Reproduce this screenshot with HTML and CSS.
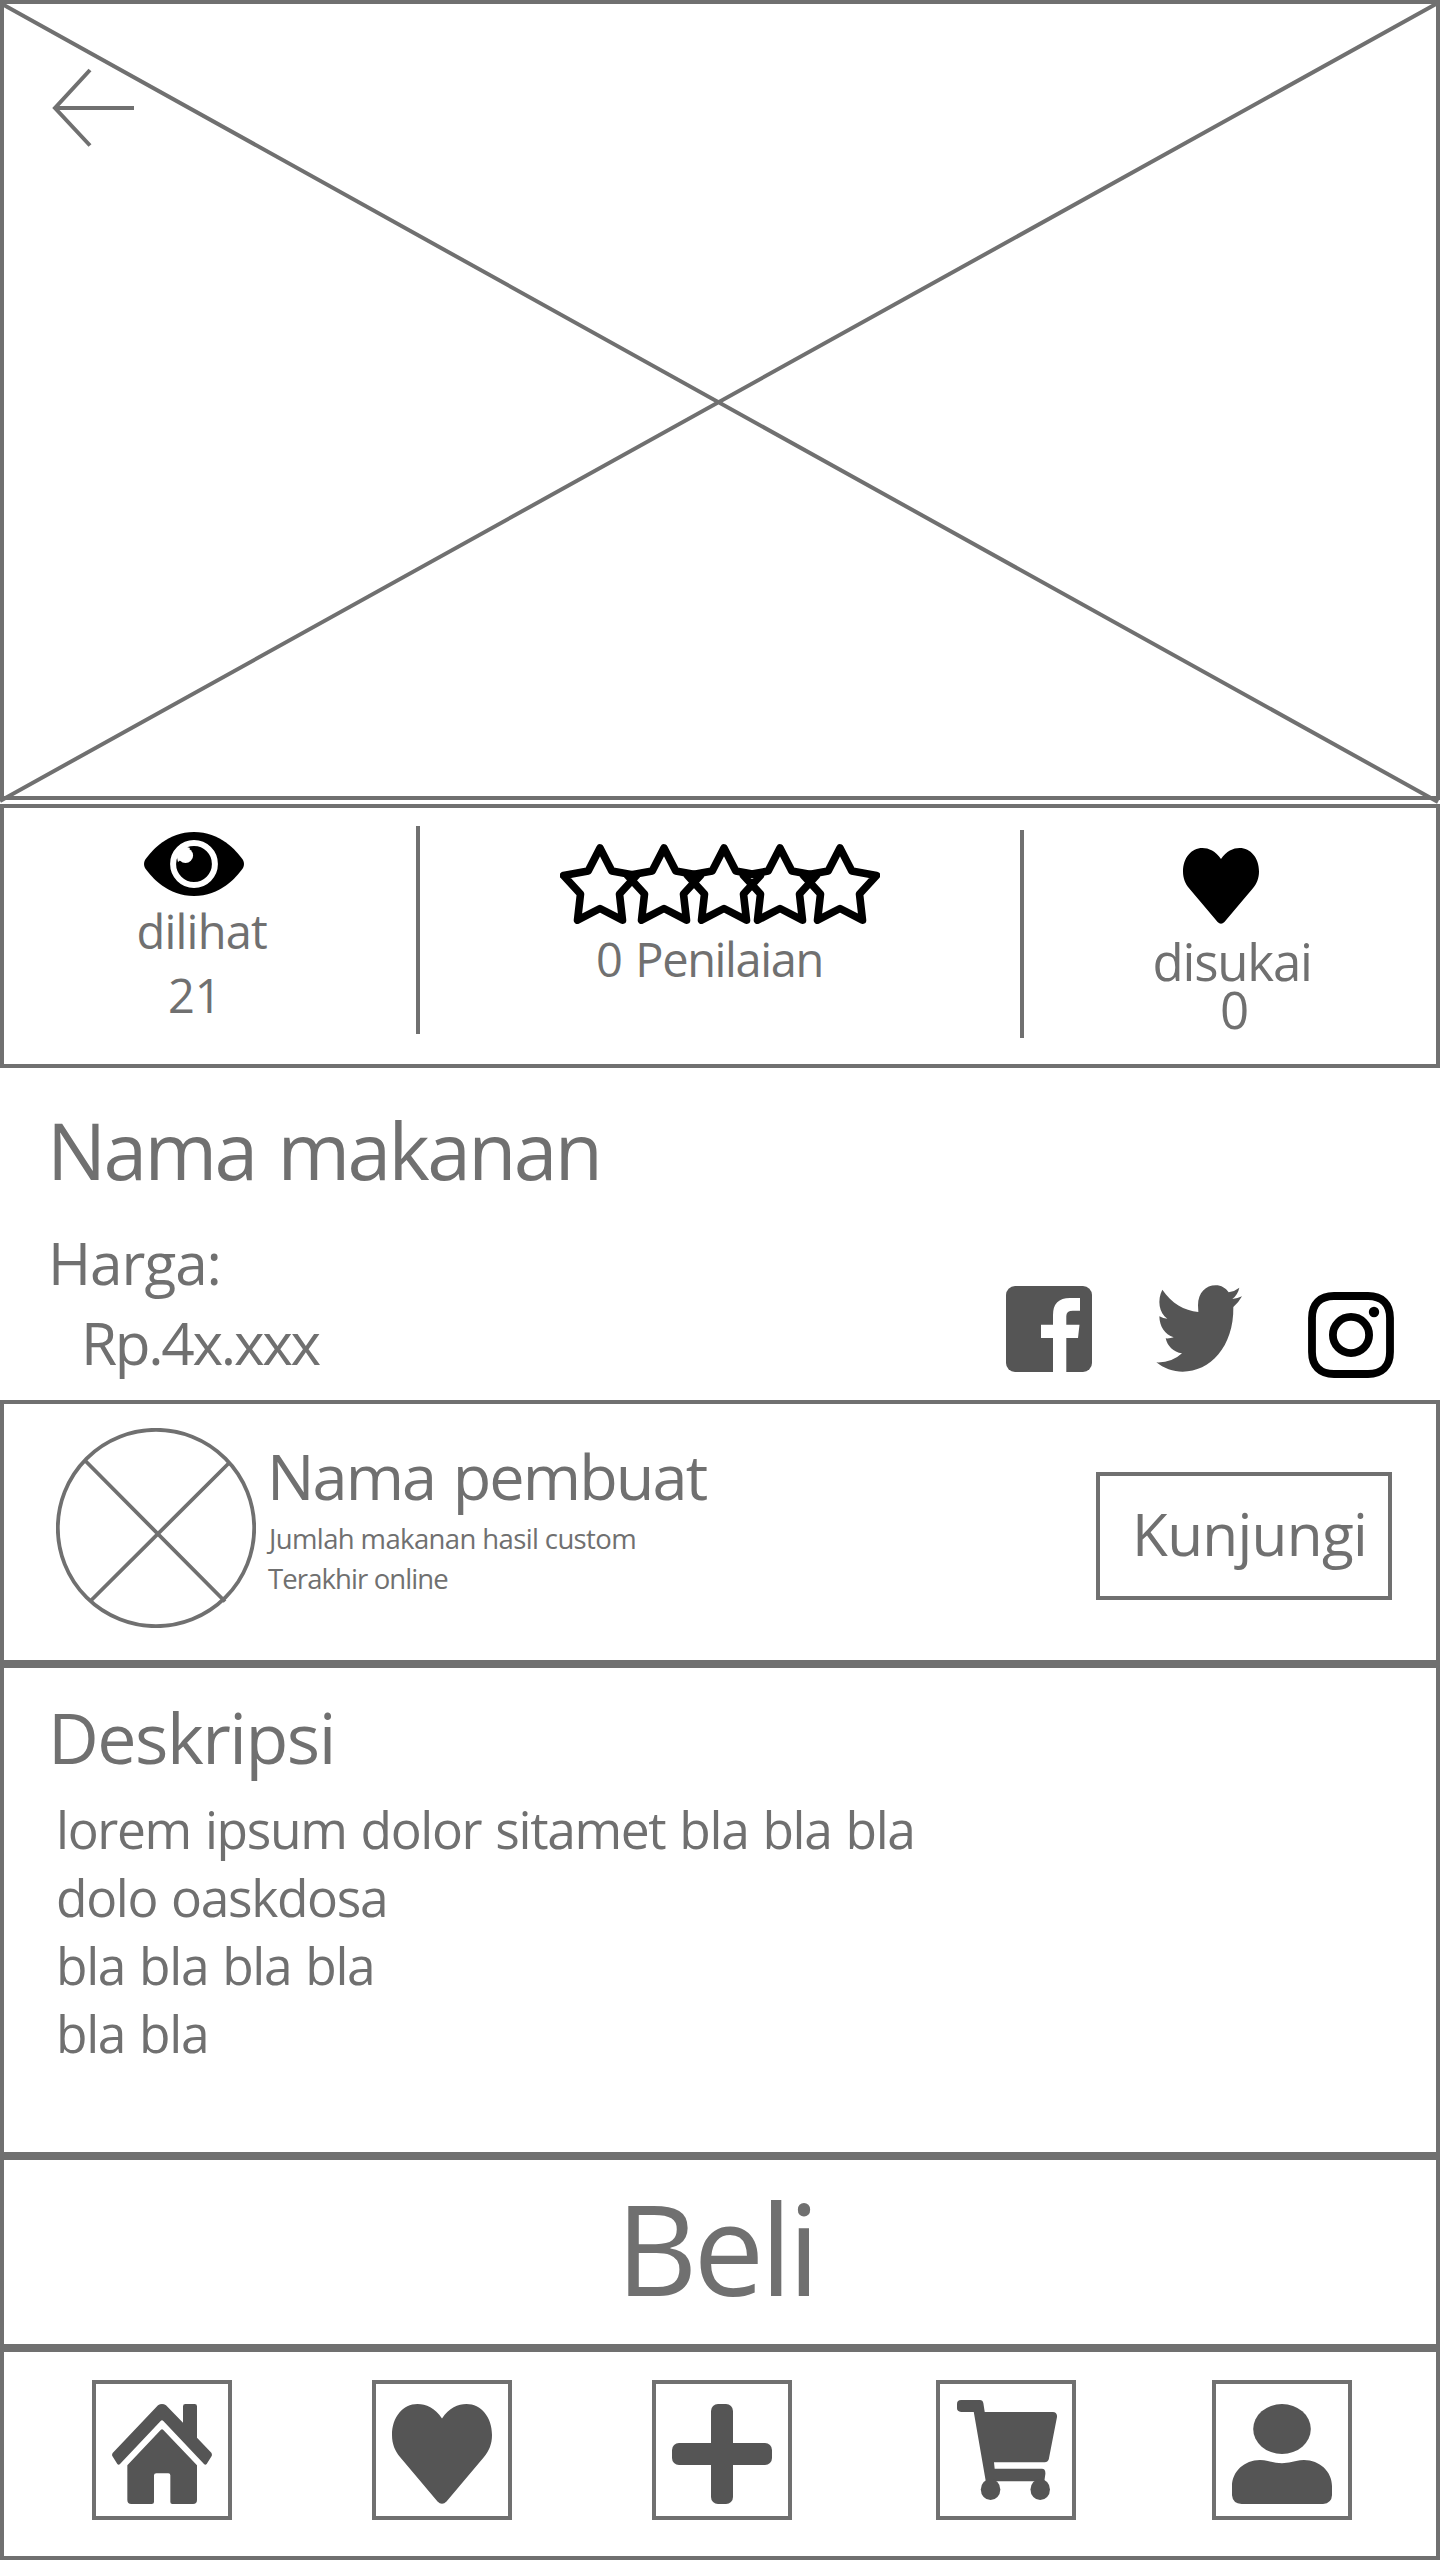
FILE: index.html
```html
<!DOCTYPE html>
<html lang="id">
<head>
<meta charset="utf-8">
<title>Nama makanan</title>
<link rel="stylesheet" href="styles.css">
</head>
<body>
<main class="page">
  <header class="hero">
    <svg class="hero-cross" width="1440" height="804" viewBox="0 0 1440 804">
      <path d="M2 4 1438 802M0 801 1436 4"/>
      <path d="M134 108H55M90 70 55 108 90 145.500"/>
    </svg>
  </header>

  <section class="stats">
    <div class="stat stat-views">
      <svg class="eye" width="100" height="64" viewBox="144 832 100 64">
        <path d="M145 860C152 850 168 832 194 832S236 850 243 860Q245 864 243 868C236 878 220 896 194 896S152 878 145 868Q143 864 145 860Z"/>
        <circle class="eye-ring" cx="194" cy="864" r="20.900"/>
        <path class="eye-glint" d="M178 862 176 853 184 846 190 848 186 856Z"/>
        <circle class="eye-glint" cx="185.500" cy="855.500" r="7.600"/>
      </svg>
      <p class="label views-label">dilihat</p>
      <p class="label views-count">21</p>
    </div>
    <span class="divider divider-left"></span>
    <div class="stat stat-rating">
      <svg class="stars" width="320" height="80" viewBox="0 0 320 80">
        <defs><path id="star" d="M40 4 51.800 27 76.500 31.500 59.500 50 62.500 76.200 40 64.500 17.500 76.200 20.500 50 3.500 31.500 28.200 27Z"/></defs>
        <use href="#star"/><use href="#star" x="64"/><use href="#star" x="124"/><use href="#star" x="180"/><use href="#star" x="240"/>
      </svg>
      <p class="label rating-label">0 Penilaian</p>
    </div>
    <span class="divider divider-right"></span>
    <div class="stat stat-likes">
      <svg class="like" width="76" height="76" viewBox="0 0 100 100">
        <path id="heart" d="M50 14.500C43 4 34 0 25.500 0 11 0 0 13 0 31 0 40 3 47 8 53L45.500 97.500Q50 102 54.500 97.500L92 53C97 47 100 40 100 31 100 13 89 0 74.500 0 66 0 57 4 50 14.500Z"/>
      </svg>
      <p class="label likes-label">disukai</p>
      <p class="label likes-count">0</p>
    </div>
  </section>

  <section class="product">
    <h1 class="product-name">Nama makanan</h1>
    <div class="product-row">
      <div class="price">
        <p class="price-label">Harga:</p>
        <p class="price-value">Rp.4x.xxx</p>
      </div>
      <div class="social">
        <svg class="facebook" width="86" height="86" viewBox="0 0 86 86">
          <rect width="86" height="86" rx="9"/>
          <path class="cutout" d="M47 86.500V52H35V38.700H47V29Q47 12 64 12H74V24.700H67Q60.300 24.700 60.300 30V38.700H73.500L72 52H60.300V86.500Z"/>
        </svg>
        <svg class="twitter" width="86" height="87" viewBox="588 135 258 261">
          <path d="M607 149C635 190 672 211 715 216L714 196C714 158 738 136 767 136 784 136 797 144 806 157Q826 153 838 143 834 163 817 177 833 175 846 169 837 186 820 201C822 320 750 395 668 395 640 395 610 385 589 367Q635 369 666 340C640 337 622 318 617 295Q630 296 641 292C614 283 599 260 598 229Q610 236 622 236C597 218 591 180 607 149Z"/>
        </svg>
        <svg class="instagram" width="86" height="86" viewBox="0 0 86 86">
          <path class="ring" d="M26 4H60C74 4 82 12 82 26V60C82 74 74 82 60 82H26C12 82 4 74 4 60V26C4 12 12 4 26 4Z"/>
          <circle class="ring" cx="43" cy="43" r="18.100"/>
          <circle cx="66" cy="20" r="5.200"/>
        </svg>
      </div>
    </div>
  </section>

  <section class="panel seller">
    <svg class="avatar" width="200" height="200" viewBox="56 1428 200 200">
      <circle cx="156" cy="1528" r="98.200"/>
      <path d="M84.500 1460 225 1601.500M229 1463 90.500 1601"/>
    </svg>
    <div class="seller-info">
      <h2 class="seller-name">Nama pembuat</h2>
      <p class="seller-meta meta-count">Jumlah makanan hasil custom</p>
      <p class="seller-meta meta-seen">Terakhir online</p>
    </div>
    <button class="visit" type="button">Kunjungi</button>
  </section>

  <section class="panel description">
    <h2 class="description-title">Deskripsi</h2>
    <p class="description-text">lorem ipsum dolor sitamet bla bla bla<br>dolo oaskdosa<br>bla bla bla bla<br>bla bla</p>
  </section>

  <button class="panel buy" type="button">Beli</button>

  <nav class="panel tabs">
    <a class="tab">
      <svg width="100" height="100" viewBox="156 192 300 300">
        <path d="M294 196Q306 188 318 196L369 248V199Q369 192 376 192H404Q411 192 411 199V293L454 338Q457 343 455 348L440 372Q436 377 432 372L310 243Q306 238 302 243L180 372Q176 377 172 372L157 348Q155 344 158 339Z"/>
        <path d="M302 270Q306 266 310 270L411 376V480Q411 492 399 492H337Q331 492 331 486V406Q331 400 325 400H289Q282 400 282 406V486Q282 492 275 492H214Q202 492 202 480V376Z"/>
      </svg>
    </a>
    <a class="tab"><svg width="100" height="100" viewBox="0 0 100 100"><use href="#heart"/></svg></a>
    <a class="tab">
      <svg width="100" height="100" viewBox="0 0 100 100">
        <rect x="39" width="22" height="100" rx="7"/>
        <rect y="39" width="100" height="22" rx="7"/>
      </svg>
    </a>
    <a class="tab tab-cart">
      <svg width="100" height="100" viewBox="166 180 292 300" preserveAspectRatio="none">
        <path d="M178 180H233Q241 180 243 190L247 216H446Q459 217 458 231L434 358Q431 367 422 367H274L276 386H414Q425 386 424 402L421 424H250L215 216H178Q166 215 166 205V192Q166 180 178 180Z"/>
        <ellipse cx="264" cy="448.500" rx="28.500" ry="31.500"/>
        <ellipse cx="409" cy="448.500" rx="28.500" ry="31.500"/>
      </svg>
    </a>
    <a class="tab tab-account">
      <svg width="100" height="100" viewBox="964 192 290 300" preserveAspectRatio="none">
        <ellipse cx="1109" cy="267" rx="83.500" ry="75"/>
        <path d="M964 438C964 395 1000 360 1045 360Q1057 360 1068 363 1109 376 1150 363 1161 360 1173 360C1218 360 1254 395 1254 438V466Q1253 490 1228 492H992Q966 491 964 466Z"/>
      </svg>
    </a>
  </nav>
</main>
</body>
</html>
```
FILE: styles.css
```css
* { box-sizing: border-box; }

body {
  margin: 0;
  background: #fff;
  color: #707070;
  font-family: "Open Sans", "Noto Sans", sans-serif;
}

h1, h2, p { margin: 0; font-weight: 400; white-space: nowrap; }
svg { display: block; flex: none; }
button { font: inherit; color: inherit; background: none; text-align: left; }

.page { width: 1440px; height: 2560px; display: flex; flex-direction: column; overflow: hidden; }

/* Image placeholder */
.hero { height: 800px; margin-bottom: 4px; border: 4px solid #707070; flex: none; }
.hero-cross { margin: -4px; fill: none; stroke: #707070; stroke-width: 4; }

/* Views, rating, likes */
.stats { display: flex; height: 264px; border: 4px solid #707070; flex: none; }
.stat { display: flex; flex-direction: column; align-items: flex-start; }
.stat-views, .stat-likes { width: 412px; }
.stat-rating { width: 600px; }
.divider { width: 4px; height: 208px; background: #707070; }
.divider-left { margin-top: 18px; }
.divider-right { margin-top: 22px; }
.label { font-size: 47px; line-height: 64px; }
.eye { margin: 24px 0 3px 140px; }
.eye-ring { fill: none; stroke: #fff; stroke-width: 6; }
.eye-glint { fill: #fff; }
.views-label { margin-left: 132.5px; letter-spacing: -0.8px; }
.views-count { margin-left: 164px; }
.stars { margin: 36px 0 3px 140px; fill: none; stroke: #000; stroke-width: 7.6; stroke-linejoin: round; }
.rating-label { margin-left: 176px; letter-spacing: -1.4px; word-spacing: 3px; }
.like { margin: 40px 0 13px 159px; }
.likes-label, .likes-count { font-size: 51px; line-height: 48px; }
.likes-label { margin-left: 128.5px; letter-spacing: -1.2px; }
.likes-count { margin-left: 196px; }

/* Name, price, share links */
.product { height: 332px; padding: 32px 46px 0 47px; flex: none; }
.product-name { font-size: 78.5px; line-height: 100px; letter-spacing: -2.6px; word-spacing: 4px; }
.product-row { display: flex; justify-content: space-between; margin-top: 21px; }
.price { padding-top: 1px; font-size: 58.5px; line-height: 80px; }
.price-label { margin-left: 1px; letter-spacing: -1.04px; }
.price-value { margin-left: 34px; letter-spacing: -2.3px; }
.social { display: flex; align-items: flex-start; padding-top: 65px; }
.facebook, .twitter { fill: #555; }
.twitter { margin: -1px 66px 0 64px; }
.cutout { fill: #fff; }
.instagram { margin-top: 6px; }
.ring { fill: none; stroke: #000; stroke-width: 7.8; }

/* Stacked outlined panels */
.panel { width: 1440px; border: 4px solid #707070; flex: none; }

.seller { display: flex; align-items: flex-start; height: 264px; padding-right: 44px; }
.avatar { margin: 24px 0 0 52px; fill: none; stroke: #707070; stroke-width: 3.8; }
.seller-info { margin: 32px auto 0 11px; }
.seller-name { font-size: 63px; line-height: 80px; letter-spacing: -1.9px; word-spacing: 3px; }
.seller-meta { font-size: 27.5px; line-height: 40px; }
.meta-count { margin: 2.5px 0 0 2px; letter-spacing: -0.62px; }
.meta-seen { margin-left: 1px; letter-spacing: -0.9px; }
.visit {
  width: 296px;
  height: 128px;
  margin-top: 68px;
  padding: 0 0 5px 32px;
  border: 4px solid #707070;
  font-size: 58.5px;
  line-height: 115px;
  letter-spacing: -0.68px;
}

.description { height: 492px; padding: 24px 0 0 44px; }
.description-title { font-size: 70px; line-height: 90px; letter-spacing: -1.5px; }
.description-text {
  margin: 13px 0 0 8px;
  font-size: 51.5px;
  line-height: 68px;
  letter-spacing: -1.35px;
  word-spacing: 2px;
}

.buy {
  height: 192px;
  padding: 0 0 9px 612px;
  font-size: 126px;
  line-height: 175px;
  letter-spacing: -4px;
}

/* Bottom navigation */
.tabs { display: flex; height: 212px; padding: 28px 0 0 88px; }
.tab { width: 140px; height: 140px; margin-right: 140px; padding: 20px 16px; border: 4px solid #707070; fill: #555; flex: none; }
.tab-cart { margin-left: 4px; margin-right: 136px; padding: 16px 17px; }
.tab-account { margin-right: 0; }
```
